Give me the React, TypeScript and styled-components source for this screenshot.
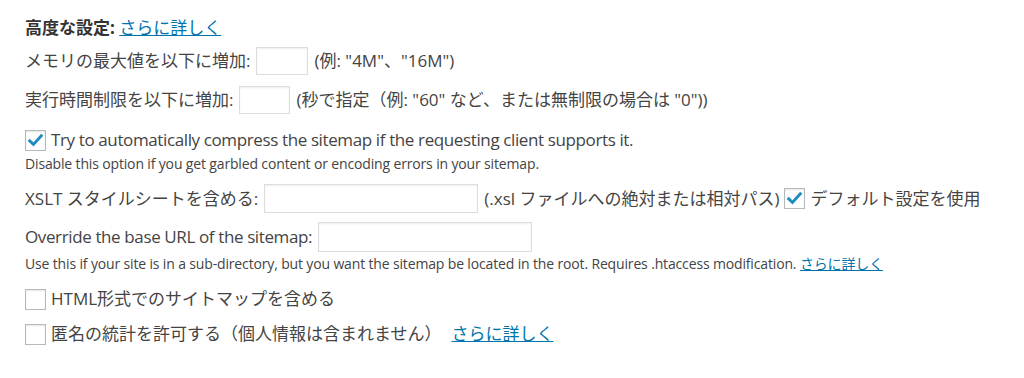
import styled, { createGlobalStyle } from 'styled-components';

const GlobalStyle = createGlobalStyle`
    html, body {
        margin: 0;
        padding: 0;
        background: #fff;
    }
    body {
        font-family: 'Open Sans', 'Noto Sans CJK JP', sans-serif;
        color: #444;
    }
`;

const moreText = 'さらに詳しく';

function CheckBox({ checked }: { checked?: boolean }) {
    return (
        <Box>
            {checked && (
                <svg width='17' height='17' viewBox='0 0 20 20'>
                    <path d='M3.2 10.4 L7.6 14.6 L16.8 4.4' fill='none' stroke='#1e8cbe' strokeWidth='3.4' strokeLinecap='square' />
                </svg>
            )}
        </Box>
    );
}

export default function App() {
    return (
        <>
            <GlobalStyle />
            <Page>
                <Heading>
                    <strong>高度な設定:</strong> <Link href='#'>{moreText}</Link>
                </Heading>
                <Row $gap={7}>
                    メモリの最大値を以下に増加:
                    <TextInput $width={52} $height={28} />
                    (例: "4M"、"16M")
                </Row>
                <Row $gap={11}>
                    実行時間制限を以下に増加:
                    <TextInput $width={51} $height={28} />
                    (秒で指定（例: "60" など、または無制限の場合は "0"))
                </Row>
                <Row $gap={14}>
                    <CheckBox checked />
                    <Latin>Try to automatically compress the sitemap if the requesting client supports it.</Latin>
                </Row>
                <Note $gap={3}>Disable this option if you get garbled content or encoding errors in your sitemap.</Note>
                <Row $gap={11}>
                    XSLT スタイルシートを含める:
                    <TextInput $width={214} $height={29} />
                    (.xsl ファイルへの絶対または相対パス)
                    <CheckBox checked />
                    デフォルト設定を使用
                </Row>
                <Row $gap={9}>
                    <Latin>Override the base URL of the sitemap:</Latin>
                    <TextInput $width={214} $height={30} />
                </Row>
                <Note $gap={3}>
                    Use this if your site is in a sub-directory, but you want the sitemap be located in the root. Requires
                    .htaccess modification. <Link href='#'>{moreText}</Link>
                </Note>
                <Row $gap={14}>
                    <CheckBox />
                    HTML形式でのサイトマップを含める
                </Row>
                <Row $gap={11}>
                    <CheckBox />
                    匿名の統計を許可する（個人情報は含まれません）
                    <Link href='#' $space={5}>
                        {moreText}
                    </Link>
                </Row>
            </Page>
        </>
    );
}

const Page = styled.main`
    display: flex;
    flex-direction: column;
    padding: 16px 0 0 25px;
    font-size: 17px;
`;

const Heading = styled.div`
    line-height: 24px;
    height: 24px;
    white-space: nowrap;

    strong {
        font-weight: 700;
        color: #333;
    }
`;

const Row = styled.div<{ $gap: number }>`
    display: flex;
    align-items: center;
    gap: 5px;
    min-height: 24px;
    margin-top: ${(props) => props.$gap}px;
    line-height: 24px;
    white-space: nowrap;
`;

const Latin = styled.span`
    letter-spacing: -0.38px;
`;

const Note = styled.p<{ $gap: number }>`
    margin: ${(props) => props.$gap}px 0 0;
    font-size: 14px;
    line-height: 18px;
    letter-spacing: -0.15px;
    white-space: nowrap;
`;

const Link = styled.a<{ $space?: number }>`
    color: #0073aa;
    text-decoration: underline;
    margin-left: ${(props) => props.$space ?? 0}px;
`;

const TextInput = styled.input.attrs({ type: 'text' })<{ $width: number; $height: number }>`
    box-sizing: border-box;
    width: ${(props) => props.$width}px;
    height: ${(props) => props.$height}px;
    margin: 0 1px;
    padding: 0 4px;
    border: 1px solid #ddd;
    box-shadow: inset 0 1px 2px rgba(0, 0, 0, 0.07);
    background: #fff;
    font: inherit;
`;

const Box = styled.span`
    box-sizing: border-box;
    display: inline-flex;
    align-items: center;
    justify-content: center;
    flex: none;
    width: 21px;
    height: 21px;
    border: 1px solid #b4b9be;
    background: #fff;
    box-shadow: inset 0 1px 2px rgba(0, 0, 0, 0.1);
`;
